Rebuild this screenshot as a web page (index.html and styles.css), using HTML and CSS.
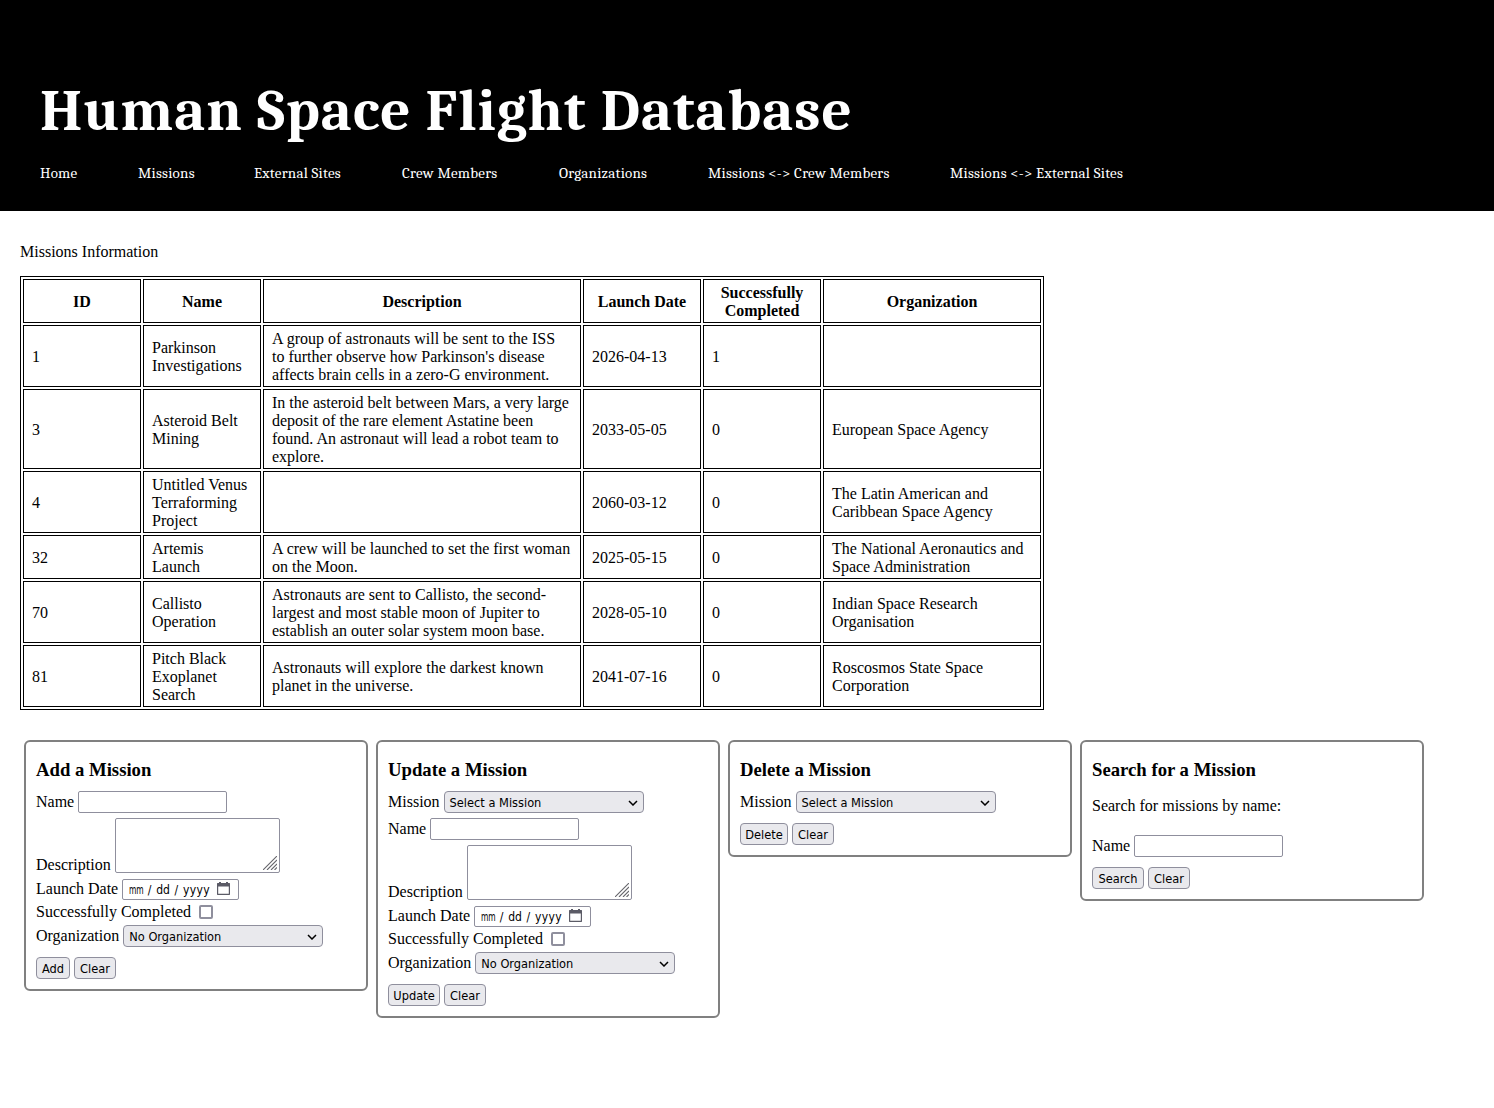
FILE: index.html
```html
<!DOCTYPE html>
<html lang="en">
<head>
<meta charset="utf-8">
<title>Human Space Flight Database</title>
<link rel="stylesheet" href="styles.css">
</head>
<body>
<header class="banner">
  <h1 class="banner-title">Human Space Flight Database</h1>
  <nav class="nav">
    <a class="nav-home">Home</a><a class="nav-missions">Missions</a><a class="nav-sites">External Sites</a><a class="nav-crew">Crew Members</a><a class="nav-orgs">Organizations</a><a class="nav-mission-crew">Missions &lt;-&gt; Crew Members</a><a class="nav-mission-sites">Missions &lt;-&gt; External Sites</a>
  </nav>
</header>
<main class="content">
  <p class="intro">Missions Information</p>
  <table class="missions">
    <colgroup><col class="c-s"><col class="c-s"><col class="c-l"><col class="c-s"><col class="c-s"><col class="c-m"></colgroup>
    <thead>
      <tr><th>ID</th><th>Name</th><th>Description</th><th>Launch Date</th><th>Successfully Completed</th><th>Organization</th></tr>
    </thead>
    <tbody>
      <tr><td>1</td><td>Parkinson Investigations</td><td>A group of astronauts will be sent to the ISS<br>to further observe how Parkinson's disease<br>affects brain cells in a zero-G environment.</td><td>2026-04-13</td><td>1</td><td></td></tr>
      <tr><td>3</td><td>Asteroid Belt Mining</td><td>In the asteroid belt between Mars, a very large<br>deposit of the rare element Astatine been<br>found. An astronaut will lead a robot team to<br>explore.</td><td>2033-05-05</td><td>0</td><td>European Space Agency</td></tr>
      <tr><td>4</td><td>Untitled Venus Terraforming Project</td><td></td><td>2060-03-12</td><td>0</td><td>The Latin American and<br>Caribbean Space Agency</td></tr>
      <tr><td>32</td><td>Artemis<br>Launch</td><td>A crew will be launched to set the first woman<br>on the Moon.</td><td>2025-05-15</td><td>0</td><td>The National Aeronautics and<br>Space Administration</td></tr>
      <tr><td>70</td><td>Callisto<br>Operation</td><td>Astronauts are sent to Callisto, the second-<br>largest and most stable moon of Jupiter to<br>establish an outer solar system moon base.</td><td>2028-05-10</td><td>0</td><td>Indian Space Research<br>Organisation</td></tr>
      <tr><td>81</td><td>Pitch Black<br>Exoplanet<br>Search</td><td>Astronauts will explore the darkest known<br>planet in the universe.</td><td>2041-07-16</td><td>0</td><td>Roscosmos State Space<br>Corporation</td></tr>
    </tbody>
  </table>

  <section class="panels">
    <form class="panel">
      <h3>Add a Mission</h3>
      <label class="row"><span>Name</span><input class="text" type="text"></label>
      <label class="row row-area"><span class="caption">Description</span><span class="area"><svg width="14" height="14" viewBox="0 0 14 14"><path d="M0 14 14 0M4 14 14 4M8 14l6-6M11.500 14 14 11.500"/></svg></span></label>
      <label class="row row-date"><span class="caption">Launch Date</span><span class="date"><span class="mm"><b>mm</b></span><i>/</i><span>dd</span><i>/</i><span>yyyy</span><svg width="13" height="13" viewBox="0 0 13 13"><path fill="#5b5b66" fill-rule="evenodd" d="M2 0h2v1h5V0h2v1h1.500l.5.5v11l-.5.5H.5l-.5-.5v-11L.5 1H2zM1.200 4.500v7.300h10.600V4.500z"/></svg></span></label>
      <label class="row row-check"><span>Successfully Completed</span><input class="check" type="checkbox"></label>
      <label class="row row-org"><span>Organization</span><span class="select">No Organization<svg width="10" height="6" viewBox="0 0 10 6"><path d="m1 1 4 4 4-4"/></svg></span></label>
      <div class="buttons"><button class="btn-add" type="button">Add</button><button class="btn-clear" type="button">Clear</button></div>
    </form>

    <form class="panel">
      <h3>Update a Mission</h3>
      <label class="row"><span>Mission</span><span class="select">Select a Mission<svg width="10" height="6" viewBox="0 0 10 6"><path d="m1 1 4 4 4-4"/></svg></span></label>
      <label class="row"><span>Name</span><input class="text" type="text"></label>
      <label class="row row-area"><span class="caption">Description</span><span class="area"><svg width="14" height="14" viewBox="0 0 14 14"><path d="M0 14 14 0M4 14 14 4M8 14l6-6M11.500 14 14 11.500"/></svg></span></label>
      <label class="row row-date"><span class="caption">Launch Date</span><span class="date"><span class="mm"><b>mm</b></span><i>/</i><span>dd</span><i>/</i><span>yyyy</span><svg width="13" height="13" viewBox="0 0 13 13"><path fill="#5b5b66" fill-rule="evenodd" d="M2 0h2v1h5V0h2v1h1.500l.5.5v11l-.5.5H.5l-.5-.5v-11L.5 1H2zM1.200 4.500v7.300h10.600V4.500z"/></svg></span></label>
      <label class="row row-check"><span>Successfully Completed</span><input class="check" type="checkbox"></label>
      <label class="row row-org"><span>Organization</span><span class="select">No Organization<svg width="10" height="6" viewBox="0 0 10 6"><path d="m1 1 4 4 4-4"/></svg></span></label>
      <div class="buttons"><button class="btn-wide" type="button">Update</button><button class="btn-clear" type="button">Clear</button></div>
    </form>

    <form class="panel">
      <h3>Delete a Mission</h3>
      <label class="row"><span>Mission</span><span class="select">Select a Mission<svg width="10" height="6" viewBox="0 0 10 6"><path d="m1 1 4 4 4-4"/></svg></span></label>
      <div class="buttons"><button class="btn-delete" type="button">Delete</button><button class="btn-clear" type="button">Clear</button></div>
    </form>

    <form class="panel">
      <h3>Search for a Mission</h3>
      <p class="hint">Search for missions by name:</p>
      <label class="row"><span>Name</span><input class="text" type="text"></label>
      <div class="buttons"><button class="btn-wide" type="button">Search</button><button class="btn-clear" type="button">Clear</button></div>
    </form>
  </section>
</main>
</body>
</html>
```
FILE: styles.css
```css
* { box-sizing: border-box; }
body {
  margin: 0;
  background: #fff;
  color: #000;
  font: 16px/18px "Liberation Serif", "Times New Roman", serif;
}
.banner {
  height: 211px;
  padding: 76px 40px 0;
  background: #000;
  color: #fff;
  font-family: Cambria, Caladea, "Noto Serif", "DejaVu Serif Condensed", "DejaVu Serif", serif;
}
.banner-title {
  margin: 0;
  font-size: 59px;
  line-height: 71px;
  font-weight: 700;
  letter-spacing: 1.080px;
  white-space: nowrap;
}
.nav {
  display: flex;
  gap: 60px;
  margin-top: 17px;
  font-size: 15px;
  line-height: 19px;
  letter-spacing: .24px;
  white-space: nowrap;
}
.nav-home { width: 38px; }
.nav-missions { width: 56px; }
.nav-sites { width: 88px; }
.nav-crew { width: 97px; }
.nav-orgs { width: 89px; }
.nav-mission-crew { width: 182px; }
.nav-mission-sites { width: 172px; }

.content { padding: 32px 20px 0; }
.intro { margin: 0 0 15px; }
.missions {
  width: 1024px;
  table-layout: fixed;
  border: 1px solid #000;
  border-collapse: separate;
  border-spacing: 2px;
}
.c-s { width: 118px; }
.c-m { width: 218px; }
.c-l { width: 318px; }
.missions th, .missions td {
  padding: 4px 8px 2px;
  border: 1px solid #000;
}

.panels {
  display: flex;
  align-items: flex-start;
  gap: 8px;
  margin: 30px 4px 0;
}
.panel {
  display: flex;
  flex-direction: column;
  width: 344px;
  flex: none;
  padding: 10px;
  border: 2px solid #808080;
  border-radius: 6px;
}
.panel h3 {
  margin: 0 0 3px;
  font-size: 18.720px;
  line-height: 36px;
}
.hint { margin: 6px 0 20px; }
.row {
  display: flex;
  align-items: center;
  gap: 4px;
  height: 22px;
  margin-bottom: 5px;
  white-space: nowrap;
}
.row-area { height: 55px; align-items: flex-end; margin-bottom: 6px; }
.row-area .caption { line-height: 16px; }
.row-date { height: 21px; }
.row-date .caption { padding-bottom: 1px; }
.row-check { height: 14px; gap: 8px; margin-bottom: 6px; }
.text, .area, .date {
  margin: 0;
  border: 1px solid #8f8f9d;
  border-radius: 2px;
  background: #fff;
}
.text { width: 149px; height: 22px; outline: 0; }
.area {
  display: flex;
  align-items: flex-end;
  justify-content: flex-end;
  width: 165px;
  height: 55px;
  padding: 2px;
}
.area svg { fill: none; stroke: #66666c; stroke-width: 1.100; }
.date {
  display: flex;
  align-items: center;
  width: 117px;
  height: 21px;
  padding-left: 6px;
  font: 12px/18px "DejaVu Sans Condensed", "DejaVu Sans", sans-serif;
}
.date i { width: 13px; text-align: center; font-style: normal; }
.date .mm { width: 14px; }
.date .mm b {
  display: inline-block;
  font-weight: 400;
  transform: scaleX(.7);
  transform-origin: 0 50%;
}
.date span:last-of-type { letter-spacing: .4px; }
.date svg { margin: -3px 0 0 7px; }
.check {
  appearance: none;
  width: 14px;
  height: 14px;
  margin: 0;
  border: 2px solid #8f8f9d;
  border-radius: 2px;
  background: #fff;
}
.select, .buttons button {
  border: 1px solid #8f8f9d;
  border-radius: 4px;
  background: #e9e9ed;
  color: #000;
  font: 12.700px/18px "DejaVu Sans Condensed", "DejaVu Sans", sans-serif;
}
.select {
  display: flex;
  align-items: center;
  justify-content: space-between;
  width: 200px;
  height: 22px;
  padding: 1px 5px 0 5px;
}
.select svg { fill: none; stroke: #000; stroke-width: 1.500; }
.buttons { display: flex; gap: 4px; margin-top: 5px; }
.buttons button {
  height: 22px;
  margin: 0;
  padding: 1px 0 0;
  text-align: center;
}
.buttons .btn-add { width: 34px; }
.buttons .btn-clear { width: 42px; }
.buttons .btn-delete { width: 48px; }
.buttons .btn-wide { width: 52px; }
```
